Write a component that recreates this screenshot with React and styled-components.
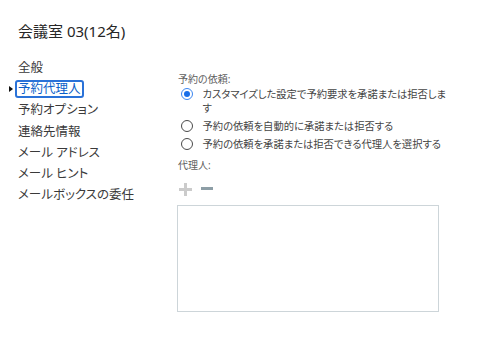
import React, { useState } from 'react'
import styled, { createGlobalStyle } from 'styled-components'

const GlobalStyle = createGlobalStyle`
    html, body {
        margin: 0;
        padding: 0;
        background: #ffffff;
    }
    body {
        font-family: "Noto Sans", "Noto Sans CJK JP", sans-serif;
        font-feature-settings: "palt";
        color: #333333;
    }
`

const StyledPage = styled.div`
    width: 480px;
    height: 344px;
    box-sizing: border-box;
    padding: 20px 0 0 18px;
    overflow: hidden;
`
const StyledTitle = styled.div`
    font-size: 15px;
    line-height: 22px;
    color: #262626;
`
const StyledBody = styled.div`
    display: flex;
    margin-top: 17px;
`
const StyledNav = styled.ul`
    list-style: none;
    margin: 0;
    padding: 0;
    width: 160px;
    display: flex;
    flex-direction: column;
    align-items: flex-start;
    gap: 3.2px;
`
const StyledNavItem = styled.li`
    position: relative;
    font-size: 12.5px;
    line-height: 14px;
    height: 14px;
    padding: 0 1px;
    margin-left: -3px;
    border: 2px solid ${props => props.active ? '#2a72d8' : 'transparent'};
    border-radius: 3px;
    color: ${props => props.active ? '#0b5fc9' : '#3a3a3a'};
    cursor: pointer;
    white-space: nowrap;
    ${props => props.active && `
        &::before {
            content: "";
            position: absolute;
            left: -8px;
            top: 4px;
            border-style: solid;
            border-width: 3px 0 3px 4px;
            border-color: transparent transparent transparent #111111;
        }
    `}
`
const StyledPanel = styled.div`
    width: 270px;
    display: flex;
    flex-direction: column;
    margin-top: 14px;
`
const StyledLabel = styled.div`
    font-size: 10px;
    line-height: 13px;
    height: 13px;
    color: #606060;
    margin-top: ${props => props.gap || 0}px;
`
const StyledRadioList = styled.div`
    display: flex;
    flex-direction: column;
    gap: 2px;
`
const StyledRadioRow = styled.label`
    display: flex;
    align-items: flex-start;
    padding: 1px 0;
    cursor: pointer;
`
const StyledRadio = styled.span`
    flex: none;
    width: 12px;
    height: 12px;
    box-sizing: border-box;
    margin: 1px 10px 0 2.5px;
    border-radius: 50%;
    border: ${props => props.checked ? '1.5px solid #3b86f0' : '1.2px solid #4a4a4a'};
    display: flex;
    align-items: center;
    justify-content: center;
    &::after {
        content: "";
        display: ${props => props.checked ? 'block' : 'none'};
        width: 6px;
        height: 6px;
        border-radius: 50%;
        background: #1a6fe8;
    }
`
const StyledRadioText = styled.span`
    font-size: 10.3px;
    line-height: 14px;
    color: #444444;
`
const StyledTools = styled.div`
    display: flex;
    align-items: center;
    gap: 9px;
    margin: 10px 0 0 1px;
    height: 14px;
    svg {
        display: block;
    }
`
const StyledListBox = styled.div`
    width: 262px;
    height: 107px;
    box-sizing: border-box;
    margin: 9px 0 0 -1px;
    border: 1px solid #cdd5d9;
    background: #ffffff;
`

const navItems = ['全般', '予約代理人', '予約オプション', '連絡先情報', 'メール アドレス', 'メール ヒント', 'メールボックスの委任']

const options = [
    'カスタマイズした設定で予約要求を承諾または拒否します',
    '予約の依頼を自動的に承諾または拒否する',
    '予約の依頼を承諾または拒否できる代理人を選択する',
]

const PlusIcon = () => (
    <svg width="13" height="13" viewBox="0 0 13 13">
        <rect x="5" y="0" width="3" height="13" fill="#cbcbcb" />
        <rect x="0" y="5" width="13" height="3" fill="#cbcbcb" />
    </svg>
)

const MinusIcon = () => (
    <svg width="12" height="13" viewBox="0 0 12 13">
        <rect x="0" y="4" width="12" height="3" fill="#8d9ea6" />
    </svg>
)

const App = () => {
    const [active, setActive] = useState(1)
    const [choice, setChoice] = useState(0)

    return (
        <StyledPage>
            <GlobalStyle />
            <StyledTitle>会議室 03(12名)</StyledTitle>
            <StyledBody>
                <StyledNav>
                    {navItems.map((item, i) => (
                        <StyledNavItem key={item} active={i === active} onClick={() => setActive(i)}>
                            {item}
                        </StyledNavItem>
                    ))}
                </StyledNav>
                <StyledPanel>
                    <StyledLabel>予約の依頼:</StyledLabel>
                    <StyledRadioList>
                        {options.map((opt, i) => (
                            <StyledRadioRow key={opt} onClick={() => setChoice(i)}>
                                <StyledRadio checked={i === choice} />
                                <StyledRadioText>{opt}</StyledRadioText>
                            </StyledRadioRow>
                        ))}
                    </StyledRadioList>
                    <StyledLabel gap={7}>代理人:</StyledLabel>
                    <StyledTools>
                        <PlusIcon />
                        <MinusIcon />
                    </StyledTools>
                    <StyledListBox />
                </StyledPanel>
            </StyledBody>
        </StyledPage>
    )
}

export default App
